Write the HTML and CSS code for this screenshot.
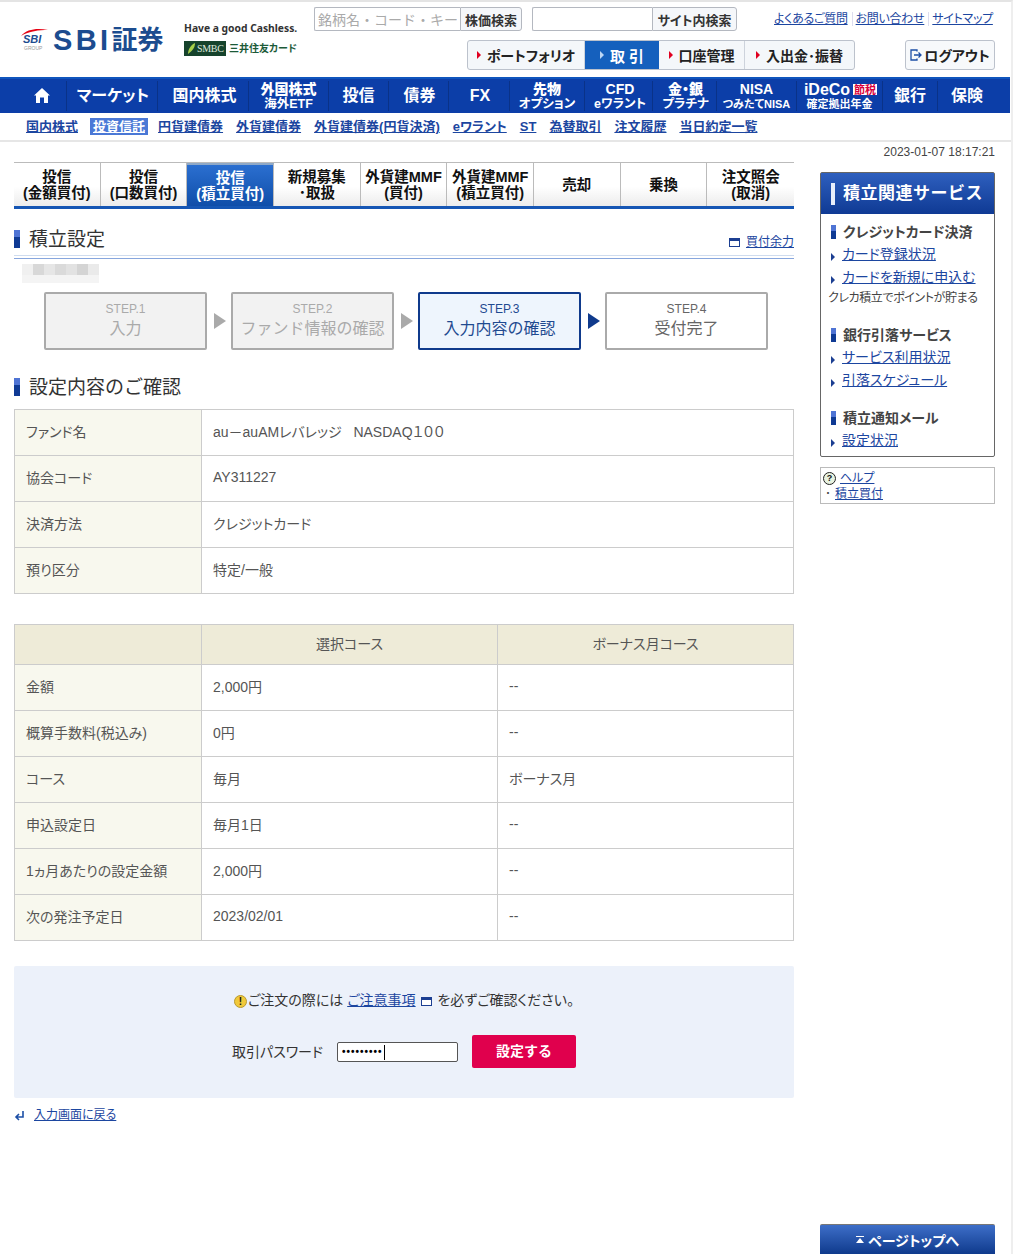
FILE: index.html
```html
<!DOCTYPE html>
<html lang="ja">
<head>
<meta charset="utf-8">
<title>積立設定</title>
<link rel="stylesheet" href="styles.css">
</head>
<body>
<div class="page">
  <header class="top">
    <a class="logo">
      <svg class="logo-mark" width="30" height="26" viewBox="0 0 30 26">
        <path d="M1 9 C7 2 17 1 28 3 C19 3 9 4 1 9 Z" fill="#e60012"/>
        <text x="3" y="16" class="mark-sbi">SBI</text>
        <text x="4" y="23" class="mark-group">GROUP</text>
      </svg>
      <span class="logo-sbi">SBI</span><span class="logo-sec">証券</span>
    </a>
    <div class="tagline">
      <div class="tag-text">Have a good Cashless.</div>
      <div class="tag-card">
        <span class="smbc"><svg width="8" height="11" viewBox="0 0 8 11"><path d="M1 11 C1 6 4 2 8 0 C8 5 5 8 1 11 Z" fill="#a8d04a"/></svg>SMBC</span>
        <span class="smcc">三井住友カード</span>
      </div>
    </div>
    <div class="top-right">
      <div class="top-row1">
        <form class="search">
          <input class="search-in w146" placeholder="銘柄名・コード・キーワード"><button type="button" class="search-btn w62">株価検索</button>
        </form>
        <form class="search">
          <input class="search-in w120"><button type="button" class="search-btn w85">サイト内検索</button>
        </form>
        <nav class="util">
          <a>よくあるご質問</a><a>お問い合わせ</a><a>サイトマップ</a>
        </nav>
      </div>
      <div class="top-row2">
        <div class="gtabs">
          <a class="gtab w118"><i class="tri"></i>ポートフォリオ</a>
          <a class="gtab w74 on"><i class="tri"></i>取 引</a>
          <a class="gtab w86"><i class="tri"></i>口座管理</a>
          <a class="gtab w110"><i class="tri"></i>入出金･振替</a>
        </div>
        <a class="logout">
          <svg width="12" height="12" viewBox="0 0 12 12" fill="none" stroke="#1c4fa6" stroke-width="1.3"><path d="M7 2.5V1H1v10h6V9.5M4 6h7M8.5 3.5 11 6 8.5 8.5"/></svg>ログアウト
        </a>
      </div>
    </div>
  </header>

  <nav class="gnav">
    <a class="home"><svg width="16" height="15" viewBox="0 0 16 15"><path d="M8 0 16 7.5 14 7.5 14 15 10 15 10 9.5 6 9.5 6 15 2 15 2 7.5 0 7.5Z" fill="#fff"/></svg></a>
    <a class="off2">マーケット</a>
    <a class="off3">国内株式</a>
    <a class="two"><b>外国株式</b><small>海外ETF</small></a>
    <a>投信</a>
    <a class="off2">債券</a>
    <a class="off2">FX</a>
    <a class="two"><b>先物</b><small>オプション</small></a>
    <a class="two off3"><b>CFD</b><small>eワラント</small></a>
    <a class="two off2"><b>金・銀</b><small>プラチナ</small></a>
    <a class="two"><b>NISA</b><small class="tiny">つみたてNISA</small></a>
    <a class="two"><b class="ideco">iDeCo<em>節税</em></b><small class="tiny">確定拠出年金</small></a>
    <a>銀行</a>
    <a class="last">保険</a>
  </nav>

  <nav class="subnav">
    <a>国内株式</a><a class="on">投資信託</a><a>円貨建債券</a><a>外貨建債券</a><a>外貨建債券(円貨決済)</a><a>eワラント</a><a>ST</a><a>為替取引</a><a>注文履歴</a><a>当日約定一覧</a>
  </nav>

  <div class="stamp">2023-01-07 18:17:21</div>

  <div class="main">
    <main class="content">
      <div class="tabs">
        <a>投信<br>(金額買付)</a>
        <a>投信<br>(口数買付)</a>
        <a class="on">投信<br>(積立買付)</a>
        <a>新規募集<br>･取扱</a>
        <a>外貨建MMF<br>(買付)</a>
        <a>外貨建MMF<br>(積立買付)</a>
        <a>売却</a>
        <a>乗換</a>
        <a>注文照会<br>(取消)</a>
      </div>

      <div class="title-row">
        <h1 class="h-mark">積立設定</h1>
        <a class="buy-link"><i class="win"></i><span>買付余力</span></a>
      </div>
      <div class="mosaic"></div>

      <ol class="steps">
        <li class="step done"><span>STEP.1</span><strong>入力</strong></li>
        <li class="arrow"></li>
        <li class="step done"><span>STEP.2</span><strong>ファンド情報の確認</strong></li>
        <li class="arrow"></li>
        <li class="step now"><span>STEP.3</span><strong>入力内容の確認</strong></li>
        <li class="arrow now"></li>
        <li class="step next"><span>STEP.4</span><strong>受付完了</strong></li>
      </ol>

      <h2 class="h-mark second">設定内容のご確認</h2>

      <table class="info">
        <tr><th>ファンド名</th><td>au－auAMレバレッジ &nbsp; NASDAQ１００</td></tr>
        <tr><th>協会コード</th><td>AY311227</td></tr>
        <tr><th>決済方法</th><td>クレジットカード</td></tr>
        <tr><th>預り区分</th><td>特定/一般</td></tr>
      </table>

      <table class="info course">
        <thead>
          <tr><th></th><th class="hd">選択コース</th><th class="hd">ボーナス月コース</th></tr>
        </thead>
        <tbody>
          <tr><th>金額</th><td>2,000円</td><td>--</td></tr>
          <tr><th>概算手数料(税込み)</th><td>0円</td><td>--</td></tr>
          <tr><th>コース</th><td>毎月</td><td>ボーナス月</td></tr>
          <tr><th>申込設定日</th><td>毎月1日</td><td>--</td></tr>
          <tr><th>1ヵ月あたりの設定金額</th><td>2,000円</td><td>--</td></tr>
          <tr><th>次の発注予定日</th><td>2023/02/01</td><td>--</td></tr>
        </tbody>
      </table>

      <form class="confirm">
        <p class="notice"><i class="warn">!</i>ご注文の際には <a>ご注意事項</a> <i class="win"></i> を必ずご確認ください。</p>
        <div class="pass-row">
          <label class="pass-label">取引パスワード</label>
          <input class="pass" type="password" value="123456789">
          <button type="button" class="submit">設定する</button>
        </div>
      </form>
      <a class="back"><svg width="10" height="11" viewBox="0 0 10 11" fill="none" stroke="#1c4fa6" stroke-width="1.6"><path d="M9 1V7H2M5 4 2 7 5 10"/></svg><span>入力画面に戻る</span></a>
    </main>

    <aside class="side">
      <section class="svc">
        <h3 class="svc-head">積立関連サービス</h3>
        <div class="svc-body">
          <h4>クレジットカード決済</h4>
          <a class="svc-link">カード登録状況</a>
          <a class="svc-link">カードを新規に申込む</a>
          <p class="svc-note">クレカ積立でポイントが貯まる</p>
          <h4 class="gap">銀行引落サービス</h4>
          <a class="svc-link">サービス利用状況</a>
          <a class="svc-link">引落スケジュール</a>
          <h4 class="gap2">積立通知メール</h4>
          <a class="svc-link">設定状況</a>
        </div>
      </section>
      <section class="help">
        <div class="help-row"><i class="q">?</i><a>ヘルプ</a></div>
        <div class="help-row two"><i class="dot">･</i><a>積立買付</a></div>
      </section>
      <a class="pagetop"><i class="up"></i>ページトップへ</a>
    </aside>
  </div>
</div>
</body>
</html>
```
FILE: styles.css
```css
* { box-sizing: border-box; }
html, body { margin: 0; padding: 0; height: 100%; overflow: hidden; background: #fff; }
body { font-family: "Liberation Sans", "Noto Sans CJK JP", "Noto Sans", sans-serif; font-size: 14px; color: #444; font-feature-settings: "palt"; }
a { color: #1c46a0; }
i { font-style: normal; }
.page { width: 1013px; height: 1254px; display: flex; flex-direction: column; border-top: 2px solid #e4e4e4; border-right: 2px solid #eee; }

/* header */
.top { height: 75px; display: flex; flex: none; }
.logo { width: 164px; flex: none; padding: 22px 0 0 20px; display: flex; align-items: flex-start; text-decoration: none; color: #1c4c8f; white-space: nowrap; }
.logo-mark { margin-top: 3px; flex: none; }
.mark-sbi { font: italic 700 11px "Liberation Sans", sans-serif; fill: #1c4c8f; }
.mark-group { font: 5px "Liberation Sans", sans-serif; fill: #999; }
.logo-sbi { font: 700 29px/32px "Liberation Sans", sans-serif; letter-spacing: 3.4px; margin-left: 3px; flex: none; }
.logo-sec { font-size: 26px; line-height: 32px; font-weight: 700; flex: none; }
.tagline { width: 150px; flex: none; padding: 18px 0 0 20px; }
.tag-text { font: 700 10.3px/16px "Noto Sans", sans-serif; color: #333; white-space: nowrap; }
.tag-card { display: flex; align-items: center; gap: 3px; margin-top: 5px; }
.smbc { width: 42px; height: 15px; background: #16432c; color: #dfe8df; font: 10px/15px "Liberation Serif", serif; display: flex; align-items: center; gap: 2px; padding-left: 3px; letter-spacing: -0.3px; }
.smcc { font-size: 10px; font-weight: 700; color: #1c5a38; line-height: 15px; white-space: nowrap; }
.top-right { width: 681px; padding-top: 5px; }
.top-row1 { display: flex; height: 33px; align-items: flex-start; }
.search { display: flex; height: 24px; margin-right: 10px; }
.search-in { height: 24px; border: 1px solid #b4b8c0; border-right: 0; border-radius: 2px 0 0 2px; padding: 0 3px; font: 14px "Noto Sans CJK JP", sans-serif; background: #fff; outline: 0; }
.search-in::placeholder { color: #aaa; opacity: 1; }
.search-btn { height: 24px; border: 1px solid #b4b8c0; border-radius: 0 3px 3px 0; background: #f5f7fa; padding: 0; font: 700 13px "Noto Sans CJK JP", sans-serif; font-feature-settings: "palt"; color: #333; }
.w146 { width: 146px; } .w62 { width: 62px; } .w120 { width: 120px; } .w85 { width: 85px; }
.util { margin-left: 27px; display: flex; font-size: 12px; line-height: 24px; letter-spacing: -0.3px; }
.util a { padding: 0 4px 0 0; margin-right: 3px; border-right: 1px solid #dde; height: 14px; line-height: 14px; margin-top: 5px; white-space: nowrap; text-decoration: underline; }
.util a:last-child { border: 0; margin: 5px 0 0; padding: 0; }
.top-row2 { display: flex; justify-content: space-between; padding-left: 153px; padding-right: 0; }
.gtabs { display: flex; height: 30px; border: 1px solid #bcc2cc; border-radius: 3px; background: #f4f7fa; overflow: hidden; }
.gtab { display: flex; align-items: center; justify-content: center; font-weight: 700; font-size: 14px; color: #222; text-decoration: none; border-right: 1px solid #cdd3dc; white-space: nowrap; }
.gtab:last-child { border: 0; }
.gtab.on { background: #1560bd; color: #fff; border: 0; font-size: 15px; }
.w118 { width: 117px; } .w74 { width: 74px; } .w86 { width: 86px; } .w110 { width: 109px; }
.tri { width: 0; height: 0; border-left: 4px solid #e00020; border-top: 4px solid transparent; border-bottom: 4px solid transparent; margin-right: 6px; }
.gtab.on .tri { border-left-color: #bcd6f5; }
.logout { width: 90px; height: 30px; border: 1px solid #bcc2cc; border-radius: 3px; background: #f7f9fb; display: flex; align-items: center; justify-content: center; gap: 2px; font-weight: 700; font-size: 14px; color: #222; text-decoration: none; white-space: nowrap; }

/* main nav */
.gnav { flex: none; width: 1010px; height: 36px; background: #0c3ea8; border-top: 2px solid #0f55bd; display: grid; grid-template-columns: 67px 91px 91px 80px 60px 60px 61px 75px 68px 64px 80px 86px 55px 72px; }
.gnav a { display: flex; flex-direction: column; align-items: center; justify-content: center; color: #fff; text-decoration: none; font-weight: 700; font-size: 16px; line-height: 15px; border-right: 1px solid #0a3288; white-space: nowrap; margin: 2px 0; padding-bottom: 2px; }
.gnav a:last-child { border: 0; }
.gnav a.two { padding-bottom: 0; }
.gnav .home { padding-left: 18px; }
.gnav .off2 { padding-left: 2px; }
.gnav .off3 { padding-left: 3px; }
.gnav .last { padding-right: 14px; }
.gnav .two b { font-size: 14px; line-height: 15px; }
.gnav .two small { font-size: 12.5px; line-height: 14px; font-weight: 700; }
.gnav .two small.tiny { font-size: 11px; }
.gnav .two b.ideco { font-size: 16px; display: flex; align-items: center; gap: 3px; font-family: "Liberation Sans", sans-serif; padding-left: 2px; }
.ideco em { font: 700 11px/11px "Noto Sans CJK JP", sans-serif; background: #fff; color: #d8003c; padding: 0 1px; }

/* sub nav */
.subnav { flex: none; height: 29px; border-bottom: 2px solid #e6e6e6; display: flex; align-items: center; padding-left: 26px; font-size: 13px; font-weight: 700; }
.subnav a { margin-right: 13px; text-decoration: underline; line-height: 17px; white-space: nowrap; }
.subnav a.on { background: #4a78d6; color: #fff; padding: 0 3px; margin-right: 10px; }
.subnav a:first-child { margin-right: 12px; }

.stamp { flex: none; height: 20px; width: 995px; text-align: right; font: 12px/21px "Liberation Sans", sans-serif; color: #444; }

/* layout */
.main { flex: 1; display: flex; padding-left: 14px; min-height: 0; }
.content { width: 780px; flex: none; }
.side { width: 175px; margin-left: 26px; flex: none; padding-top: 10px; display: flex; flex-direction: column; }

/* tabs */
.tabs { display: grid; grid-template-columns: repeat(9, 1fr); height: 47px; border-top: 1px solid #bbb; border-bottom: 3px solid #1556b4; }
.tabs a { display: flex; align-items: center; justify-content: center; text-align: center; font-weight: 700; font-size: 14.5px; line-height: 16px; color: #111; background: linear-gradient(#fff 55%, #ececec); border-right: 1px solid #bbb; text-decoration: none; white-space: nowrap; font-feature-settings: normal; }
.tabs a:last-child { border-right: 0; }
.tabs a.on { background: linear-gradient(#2b6fd0, #0f4ea9); color: #fff; border-top: 2px solid #8fa9c8; }

/* headings */
.h-mark { font-size: 19px; font-weight: 400; color: #333; margin: 0; height: 18px; line-height: 20px; padding-left: 15px; background: linear-gradient(#4f74d4 40%, #0f3a94 40%) no-repeat 0 0 / 6px 18px; white-space: nowrap; font-feature-settings: normal; }
.title-row { display: flex; justify-content: space-between; align-items: flex-end; margin-top: 20px; height: 27px; border-bottom: 1px solid #cfdcef; position: relative; }
.title-row::after { content: ""; position: absolute; left: 0; right: 0; bottom: -4px; height: 1px; background: #88a6dd; }
.title-row .h-mark { margin-bottom: 7px; }
.buy-link { font-size: 12px; display: flex; align-items: center; line-height: 16px; margin-bottom: 5px; text-decoration: none; }
.buy-link span { text-decoration: underline; margin-left: 6px; }
.win { display: inline-block; width: 11px; height: 9px; border: 1px solid #1c3f92; border-top-width: 3px; background: #fff; vertical-align: -1px; }
.notice .win { margin: 0 1px 0 2px; }
.mosaic { width: 77px; height: 19px; margin: 8px 0 0 8px; background:
  linear-gradient(90deg, #f0f0f0 0 11px, #d8d8d8 11px 22px, #e6e6e6 22px 33px, #dadada 33px 44px, #e2e2e2 44px 55px, #d4d4d4 55px 66px, #eaeaea 66px) 0 0 / 100% 11px no-repeat,
  #f4f4f4; }

/* steps */
.steps { list-style: none; margin: 9px 0 0 30px; padding: 0; display: flex; align-items: center; }
.step { width: 163px; height: 58px; border: 2px solid #aaa; border-radius: 2px; display: flex; flex-direction: column; align-items: center; justify-content: center; text-align: center; padding-bottom: 2px; }
.step span { font-size: 12px; line-height: 16px; }
.step strong { font-weight: 400; font-size: 16px; line-height: 23px; white-space: nowrap; font-feature-settings: normal; }
.step.done { background: #f2f2f2; color: #aaa; }
.step.now { background: #eef5fd; border-color: #0f3a8c; color: #1f4a90; }
.step.next { background: #fff; color: #666; }
.arrow { width: 24px; display: flex; justify-content: center; padding-left: 2px; }
.arrow::before { content: ""; width: 0; height: 0; border-left: 12px solid #aaa; border-top: 8px solid transparent; border-bottom: 8px solid transparent; }
.arrow.now::before { border-left-color: #0f3a8c; }
.second { margin-top: 28px; }

/* tables */
.info { width: 780px; border-collapse: collapse; table-layout: fixed; margin-top: 13px; font-size: 14px; }
.info th, .info td { border: 1px solid #ccc; height: 46px; padding: 0 11px 4px; font-weight: 400; text-align: left; color: #555; }
.info th { width: 187px; background: #f8f8ee; white-space: nowrap; }
.course { margin-top: 30px; }
.course thead th { height: 40px; background: #eeebd8; }
.course th.hd { width: auto; text-align: center; }

/* confirm */
.confirm { margin-top: 25px; height: 132px; background: #ecf1fa; border-radius: 2px; padding-top: 23px; }
.notice { margin: 0; text-align: center; line-height: 22px; color: #333; }
.warn { display: inline-block; width: 13px; height: 13px; border-radius: 50%; background: #f1c93a; border: 1px solid #b89a30; color: #111; font: 700 10px/11px "Liberation Sans", sans-serif; text-align: center; vertical-align: 0; margin-right: 1px; }
.notice a { text-decoration: underline; }
.pass-row { display: flex; justify-content: center; align-items: center; margin-top: 24px; height: 33px; }
.pass-label { color: #333; margin: 0 15px 2px 0; white-space: nowrap; width: 90px; }
.pass { width: 121px; height: 20px; border: 1px solid #555; border-radius: 2px; padding: 0 4px; font: 700 10px "Liberation Sans", sans-serif; letter-spacing: 1px; outline: 0; background: #fff linear-gradient(#000, #000) no-repeat 46px 2px / 1px 15px; }
.submit { width: 104px; height: 33px; margin-left: 14px; border: 0; border-radius: 2px; background: #e0004d; color: #fff; padding: 0 0 3px; font: 700 14px "Noto Sans CJK JP", sans-serif; }
.back { display: flex; align-items: center; gap: 10px; font-size: 12px; line-height: 16px; margin-top: 9px; text-decoration: none; }
.back span { text-decoration: underline; }

/* sidebar */
.svc { border: 1px solid #666; border-radius: 2px; height: 285px; }
.svc-head { margin: 0; height: 41px; background: linear-gradient(#2e5fbe, #0f3a94); color: #fff; font-size: 17px; font-weight: 700; line-height: 39px; padding-left: 10px; white-space: nowrap; display: flex; align-items: center; gap: 8px; letter-spacing: 0.5px; font-feature-settings: normal; }
.svc-head::before { content: ""; width: 4px; height: 22px; background: #e8eefa; flex: none; }
.svc-body { padding: 7px 0 0 10px; }
.svc-body h4 { margin: 0; font-size: 14px; font-weight: 700; line-height: 22px; color: #444; padding-left: 12px; background: linear-gradient(#4f74d4 45%, #0f3a94 45%) no-repeat 0 4px / 5px 14px; white-space: nowrap; }
.svc-body h4.gap { margin-top: 17px; }
.svc-body h4.gap2 { margin-top: 15px; }
.svc-link { display: block; line-height: 23px; padding-left: 11px; text-decoration: underline; position: relative; white-space: nowrap; }
.svc-link::before { content: ""; position: absolute; left: 0; top: 10px; border-left: 4px solid #1c3f92; border-top: 4px solid transparent; border-bottom: 4px solid transparent; }
.svc-note { margin: 0 0 0 -3px; font-size: 12px; line-height: 18px; color: #444; white-space: nowrap; letter-spacing: -0.4px; }
.help { margin-top: 10px; height: 37px; border: 1px solid #bbb; font-size: 12px; padding: 2px 0 0 2px; line-height: 16px; }
.help-row { display: flex; align-items: center; }
.help-row a { text-decoration: underline; }
.dot { width: 12px; padding-left: 2px; }
.q { width: 13px; height: 13px; border-radius: 50%; border: 1.5px solid #222; background: #e8f2e0; color: #111; font: 700 9px/10px "Liberation Sans", sans-serif; text-align: center; margin-right: 4px; }
.pagetop { margin-top: auto; height: 30px; border-top: 1px solid #777; border-radius: 2px 2px 0 0; background: linear-gradient(#3d6ec8, #0f3a8c); color: #fff; font-weight: 700; font-size: 14px; display: flex; align-items: center; justify-content: center; gap: 4px; text-decoration: none; }
.up { width: 8px; height: 7px; border-top: 1px solid #fff; position: relative; }
.up::after { content: ""; position: absolute; left: 0; top: 1px; border-bottom: 5px solid #fff; border-left: 4px solid transparent; border-right: 4px solid transparent; }
```
